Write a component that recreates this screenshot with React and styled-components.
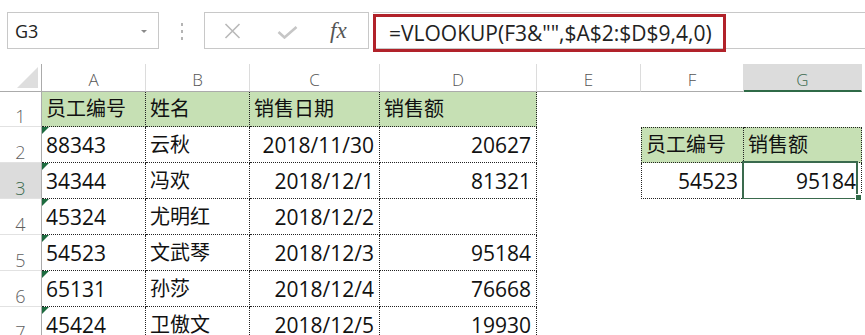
import React from "react";
import styled, { createGlobalStyle } from "styled-components";

const GlobalStyle = createGlobalStyle`
  html, body {
    margin: 0;
    padding: 0;
    background: #fff;
    overflow: hidden;
  }
  body {
    font-family: "Open Sans", "Noto Sans CJK SC", sans-serif;
  }
`;

const Page = styled.div`
  width: 865px;
  height: 335px;
  overflow: hidden;
  background: #fff;
`;

const FormulaBar = styled.div`
  display: flex;
  align-items: flex-start;
  height: 64px;
  padding: 12px 0 0 7px;
  box-sizing: border-box;
`;

const NameBox = styled.div`
  position: relative;
  display: flex;
  align-items: center;
  justify-content: space-between;
  width: 152px;
  height: 37px;
  box-sizing: border-box;
  border: 1px solid #c8c8c8;
  padding: 0 11px 0 7px;
  font-size: 18px;
  color: #222;
`;

const Caret = styled.span`
  width: 0;
  height: 0;
  border-left: 3px solid transparent;
  border-right: 3px solid transparent;
  border-top: 3px solid #8a8a8a;
  margin-top: 2px;
`;

const Grip = styled.div`
  display: flex;
  flex-direction: column;
  align-items: center;
  gap: 4px;
  width: 45px;
  padding-top: 11px;
`;

const GripDot = styled.span`
  width: 2px;
  height: 3px;
  background: #b4b4b4;
`;

const FxBox = styled.div`
  display: flex;
  align-items: center;
  width: 165px;
  height: 37px;
  box-sizing: border-box;
  border: 1px solid #c8c8c8;
  padding-left: 19px;
  margin-right: 4px;
`;

const FxLabel = styled.span`
  font-family: "Liberation Serif", "DejaVu Serif", serif;
  font-style: italic;
  font-size: 23px;
  color: #555;
  margin-left: 32px;
  line-height: 1;
`;

const FormulaInput = styled.div`
  flex: 1;
  height: 37px;
  box-sizing: border-box;
  border-top: 1px solid #c8c8c8;
  border-bottom: 1px solid #c8c8c8;
`;

const Highlight = styled.div`
  display: flex;
  align-items: center;
  width: 353px;
  height: 38px;
  box-sizing: border-box;
  margin-top: 1px;
  border: 3px solid #b1222a;
  padding-left: 13px;
  font-size: 21px;
  color: #222;
  white-space: nowrap;
`;

const Sheet = styled.div`
  display: grid;
  grid-template-columns: 42px 104px 104px 130px 157px 104px 103px 118px 1fr;
  grid-template-rows: 28px 35px repeat(7, 36px);
`;

const Corner = styled.div`
  position: relative;
  box-sizing: border-box;
  border-right: 1px solid #ababab;
  border-bottom: 1px solid #ababab;

  &::after {
    content: "";
    position: absolute;
    right: 3px;
    bottom: 3px;
    width: 0;
    height: 0;
    border-left: 21px solid transparent;
    border-bottom: 21px solid #dedede;
  }
`;

const ColHeader = styled.div`
  display: flex;
  align-items: flex-end;
  justify-content: center;
  box-sizing: border-box;
  padding-bottom: ${(p) => (p.$active ? "0" : "1px")};
  font-size: 17px;
  font-weight: 300;
  line-height: 20px;
  color: ${(p) => (p.$active ? "#3b6a4f" : "#555")};
  background: ${(p) => (p.$active ? "#dcdcdc" : "#fff")};
  border-right: 1px solid #dcdcdc;
  border-bottom: ${(p) => (p.$active ? "2px solid #2f6a47" : "1px solid #ababab")};
`;

const RowHeader = styled.div`
  display: flex;
  align-items: flex-end;
  justify-content: center;
  box-sizing: border-box;
  font-size: 18px;
  font-weight: 300;
  line-height: 20px;
  color: ${(p) => (p.$active ? "#3b6a4f" : "#5f5f5f")};
  background: ${(p) => (p.$active ? "#dcdcdc" : "#fff")};
  border-right: 1px solid #ababab;
  border-bottom: 1px solid #e2e2e2;
`;

const Cell = styled.div`
  position: relative;
  display: flex;
  align-items: flex-end;
  justify-content: ${(p) => (p.$right ? "flex-end" : "flex-start")};
  box-sizing: border-box;
  padding: 0 5px 4px 4px;
  font-size: ${(p) => (p.$han ? "20px" : "21px")};
  line-height: 26px;
  color: #111;
  white-space: nowrap;
  background: ${(p) => (p.$fill ? "#c6e0b4" : "#fff")};
  border-style: dotted;
  border-color: #222;
  border-width: ${(p) =>
    ["t", "r", "b", "l"].map((s) => ((p.$b || "").includes(s) ? "1px" : "0")).join(" ")};

  ${(p) =>
    p.$flag &&
    `
    &::before {
      content: "";
      position: absolute;
      top: 0;
      left: 0;
      border-top: 7px solid #1d6b3f;
      border-right: 7px solid transparent;
    }
  `}

  ${(p) =>
    p.$selected &&
    `
    &::after {
      content: "";
      position: absolute;
      top: -2px;
      left: -2px;
      right: 3px;
      bottom: -2px;
      border: 2px solid #3a6a4d;
      pointer-events: none;
    }
  `}
`;

const Handle = styled.span`
  position: absolute;
  right: -1px;
  bottom: -3px;
  width: 5px;
  height: 5px;
  background: #2f6a47;
  border: 1px solid #fff;
  z-index: 2;
`;

const Blank = styled.div``;

const XIcon = () => (
  <svg width="17" height="16" viewBox="0 0 17 16">
    <path d="M1.5 1 L15.5 15 M15.5 1 L1.5 15" stroke="#b9b9b9" strokeWidth="1.6" fill="none" />
  </svg>
);

const CheckIcon = () => (
  <svg width="21" height="13" viewBox="0 0 21 13" style={{ marginLeft: 36, marginTop: 4 }}>
    <path d="M1.5 6 L7.5 11.5 L19.5 1" stroke="#c6c6c6" strokeWidth="2.6" fill="none" />
  </svg>
);

const cols = ["A", "B", "C", "D", "E", "F", "G"];

const table = [
  ["员工编号", "姓名", "销售日期", "销售额"],
  ["88343", "云秋", "2018/11/30", "20627"],
  ["34344", "冯欢", "2018/12/1", "81321"],
  ["45324", "尤明红", "2018/12/2", ""],
  ["54523", "文武琴", "2018/12/3", "95184"],
  ["65131", "孙莎", "2018/12/4", "76668"],
  ["45424", "卫傲文", "2018/12/5", "19930"],
];

const lookup = {
  2: [{ v: "员工编号", han: true, fill: true, b: "ltrb" }, { v: "销售额", han: true, fill: true, b: "trb" }],
  3: [{ v: "54523", right: true, b: "lrb" }, { v: "95184", right: true, b: "rb", selected: true }],
};

const App = () => {
  return (
    <Page>
      <GlobalStyle />
      <FormulaBar>
        <NameBox>
          <span>G3</span>
          <Caret />
        </NameBox>
        <Grip>
          <GripDot />
          <GripDot />
          <GripDot />
        </Grip>
        <FxBox>
          <XIcon />
          <CheckIcon />
          <FxLabel>fx</FxLabel>
        </FxBox>
        <FormulaInput>
          <Highlight>=VLOOKUP(F3&amp;"",$A$2:$D$9,4,0)</Highlight>
        </FormulaInput>
      </FormulaBar>

      <Sheet>
        <Corner />
        {cols.map((c) => (
          <ColHeader key={c} $active={c === "G"}>
            {c}
          </ColHeader>
        ))}
        <Blank />

        {table.map((row, i) => {
          const r = i + 1;
          const side = lookup[r] || [null, null];
          return (
            <React.Fragment key={r}>
              <RowHeader $active={r === 3}>{r}</RowHeader>
              {row.map((v, j) => (
                <Cell
                  key={j}
                  $b="rb"
                  $fill={r === 1}
                  $han={r === 1 || j === 1}
                  $right={r > 1 && j > 1}
                  $flag={r > 1 && j === 0}
                >
                  {v}
                </Cell>
              ))}
              <Cell />
              {side.map((s, k) =>
                s ? (
                  <Cell
                    key={k}
                    $b={s.b}
                    $fill={s.fill}
                    $han={s.han}
                    $right={s.right}
                    $selected={s.selected}
                  >
                    {s.v}
                    {s.selected && <Handle />}
                  </Cell>
                ) : (
                  <Cell key={k} />
                )
              )}
              <Blank />
            </React.Fragment>
          );
        })}
      </Sheet>
    </Page>
  );
};

export default App;
